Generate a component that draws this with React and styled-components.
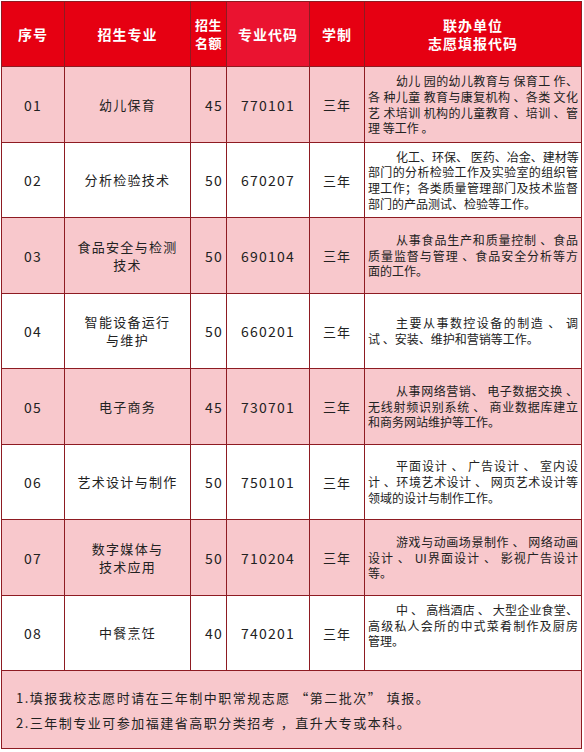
import styled, { createGlobalStyle } from 'styled-components';

const GlobalStyle = createGlobalStyle`
	html, body {
		margin: 0;
		padding: 0;
		background: #fff;
	}
	body {
		font-family: "Noto Sans CJK SC", "Noto Sans", sans-serif;
	}
`;

const majors = [
	{
		no: '01',
		name: ['幼儿保育'],
		quota: '45',
		code: '770101',
		lines: ['幼儿 园的幼儿教育与 保育工 作、', '各 种儿童 教育与康复机构 、各类 文化', '艺 术培训 机构的儿童教育 、培训 、管', '理 等工作 。'],
	},
	{
		no: '02',
		name: ['分析检验技术'],
		quota: '50',
		code: '670207',
		lines: ['化工、环保、 医药、冶金、建材等', '部门的分析检验工作及实验室的组织管', '理工作；各类质量管理部门及技术监督', '部门的产品测试、检验等工作。'],
	},
	{
		no: '03',
		name: ['食品安全与检测', '技术'],
		quota: '50',
		code: '690104',
		lines: ['从事食品生产和质量控制 、食品', '质量监督与管理 、食品安全分析等方', '面的工作。'],
	},
	{
		no: '04',
		name: ['智能设备运行', '与维护'],
		quota: '50',
		code: '660201',
		lines: ['主要从事数控设备的制造 、 调', '试 、安装、维护和营销等工作。'],
	},
	{
		no: '05',
		name: ['电子商务'],
		quota: '45',
		code: '730701',
		lines: ['从事网络营销、 电子数据交换 、', '无线射频识别系统 、 商业数据库建立', '和商务网站维护等工作。'],
	},
	{
		no: '06',
		name: ['艺术设计与制作'],
		quota: '50',
		code: '750101',
		lines: ['平面设计 、 广告设计 、 室内设', '计 、环境艺术设计 、 网页艺术设计等', '领域的设计与制作工作。'],
	},
	{
		no: '07',
		name: ['数字媒体与', '技术应用'],
		quota: '50',
		code: '710204',
		lines: ['游戏与动画场景制作 、 网络动画', '设计 、 UI界面设计 、 影视广告设计', '等。'],
	},
	{
		no: '08',
		name: ['中餐烹饪'],
		quota: '40',
		code: '740201',
		lines: ['中 、 高档酒店 、 大型企业食堂、', '高级私人会所的中式菜肴制作及厨房', '管理。'],
		top: true,
	},
];

const App = () => {
	return (
		<Page>
			<GlobalStyle />
			<Table>
				<colgroup>
					<col style={{ width: 63 }} />
					<col style={{ width: 126 }} />
					<col style={{ width: 36 }} />
					<col style={{ width: 83 }} />
					<col style={{ width: 55 }} />
					<col style={{ width: 217 }} />
				</colgroup>
				<thead>
					<tr>
						<HeadCell>序号</HeadCell>
						<HeadCell>招生专业</HeadCell>
						<HeadCell $narrow>
							<HeadLine>招生</HeadLine>
							<HeadLine>名额</HeadLine>
						</HeadCell>
						<HeadCell $light>专业代码</HeadCell>
						<HeadCell>学制</HeadCell>
						<HeadCell>
							<HeadLine>联办单位</HeadLine>
							<HeadLine>志愿填报代码</HeadLine>
						</HeadCell>
					</tr>
				</thead>
				<tbody>
					{majors.map((m, i) => (
						<Row key={m.no} $pink={i % 2 === 0} $h={i % 2 === 0 ? 76 : 75}>
							<NumCell>{m.no}</NumCell>
							<NameCell>
								{m.name.map((n) => (
									<div key={n}>{n}</div>
								))}
							</NameCell>
							<NumCell $right>{m.quota}</NumCell>
							<NumCell>{m.code}</NumCell>
							<TermCell>三年</TermCell>
							<DescCell $top={m.top}>
								<DescBody $top={m.top}>
									{m.lines.map((line, j) => (
										<DescLine key={j} $first={j === 0} $last={j === m.lines.length - 1}>
											{line}
										</DescLine>
									))}
								</DescBody>
							</DescCell>
						</Row>
					))}
					<Row $pink $h={78}>
						<NoteCell colSpan={6}>
							<NoteLine>1.填报我校志愿时请在三年制中职常规志愿 “第二批次” 填报。</NoteLine>
							<NoteLine>2.三年制专业可参加福建省高职分类招考 ，直升大专或本科。</NoteLine>
						</NoteCell>
					</Row>
				</tbody>
			</Table>
		</Page>
	);
};

export default App;

// CSS
const Page = styled.div`
	width: 584px;
	padding: 1px 0 0 1px;
	box-sizing: border-box;
`;

const Table = styled.table`
	width: 581px;
	table-layout: fixed;
	border-collapse: collapse;
	color: #222;

	td,
	th {
		border: 1px solid #8e1b22;
		padding: 0;
		vertical-align: middle;
	}
`;

const HeadCell = styled.th`
	height: 64px;
	background: ${(p) => (p.$light ? '#ea1330' : '#e60012')};
	color: #fff;
	font-size: ${(p) => (p.$narrow ? '13px' : '14px')};
	font-weight: 700;
	letter-spacing: ${(p) => (p.$narrow ? '0.5px' : '1px')};
	text-align: center;
`;

const HeadLine = styled.div`
	height: 18px;
	line-height: 18px;
	white-space: nowrap;
`;

const Row = styled.tr`
	background: ${(p) => (p.$pink ? '#f8c8cc' : '#fff')};

	td {
		height: ${(p) => p.$h - 1}px;
	}
`;

const NumCell = styled.td`
	font-size: 14px;
	letter-spacing: 1.2px;
	text-align: ${(p) => (p.$right ? 'right' : 'center')};
	padding-right: ${(p) => (p.$right ? '3px' : '0')} !important;
`;

const NameCell = styled.td`
	font-size: 13px;
	line-height: 18px;
	letter-spacing: 1.3px;
	text-align: center;
`;

const TermCell = styled.td`
	font-size: 13px;
	letter-spacing: 1px;
	text-align: center;
`;

const DescCell = styled.td`
	padding: 0 3px !important;
	vertical-align: ${(p) => (p.$top ? 'top' : 'middle')} !important;
	font-size: 12px;
	line-height: 15.7px;
`;

const DescBody = styled.div`
	padding-top: ${(p) => (p.$top ? '6px' : '0')};
`;

const DescLine = styled.div`
	text-align: justify;
	text-align-last: ${(p) => (p.$last ? 'left' : 'justify')};
	padding-left: ${(p) => (p.$first ? '28px' : '0')};
	white-space: nowrap;
`;

const NoteCell = styled.td`
	padding-left: 14px !important;
	font-size: 13px;
	line-height: 25px;
	letter-spacing: 1.5px;
	text-align: left;
`;

const NoteLine = styled.div``;
